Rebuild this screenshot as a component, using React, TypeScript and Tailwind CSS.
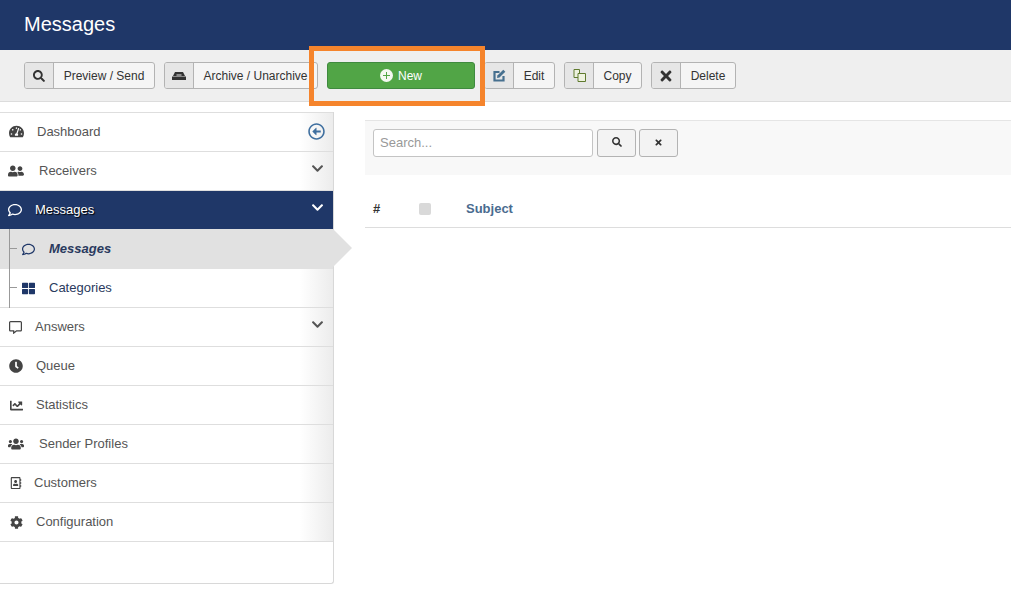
import type { ReactNode } from "react";
import {
  FaChartLine,
  FaChevronDown,
  FaCog,
  FaRegAddressBook,
  FaRegArrowAltCircleLeft,
  FaRegComment,
  FaRegCommentAlt,
  FaClock,
  FaSearch,
  FaTachometerAlt,
  FaThLarge,
  FaTimes,
  FaUserFriends,
  FaUsers,
} from "react-icons/fa";

function ToolButton({ icon, label, className }: { icon: ReactNode; label: string; className: string }) {
  return (
    <div className={`flex h-[27px] shrink-0 overflow-hidden rounded-[3px] border border-[#b3b3b3] bg-[#f5f5f5] text-xs text-[#333] ${className}`}>
      <span className="flex w-[29px] shrink-0 items-center justify-center border-r border-[#b3b3b3] bg-[#e6e6e6]">{icon}</span>
      <span className="flex flex-1 items-center justify-center whitespace-nowrap">{label}</span>
    </div>
  );
}

function NavRow({
  icon,
  label,
  textClass,
  chevron,
}: {
  icon: ReactNode;
  label: string;
  textClass: string;
  chevron?: boolean;
}) {
  return (
    <div className="relative flex h-[39px] items-center border-b border-[#dedede] bg-gradient-to-r from-white from-[90%] to-[#ececec] pl-[8px] text-[13px] text-[#555]">
      <span className="flex w-[16px] shrink-0 items-center justify-center text-[#444]">{icon}</span>
      <span className={textClass}>{label}</span>
      {chevron ? <FaChevronDown className="absolute right-[9px] top-[10px] text-[13px] text-[#555]" /> : null}
    </div>
  );
}

export default function App() {
  return (
    <div className="relative h-[595px] w-[1011px] overflow-hidden bg-white font-['Liberation_Sans',Arial,sans-serif]">
      <header className="flex h-[50px] items-center bg-[#1f3768] pb-[2px] pl-6 text-xl text-white">Messages</header>

      <div className="flex h-[52px] items-center gap-[9px] border-b border-[#dcdcdc] bg-[#efefef] pl-6">
        <ToolButton className="w-[131px]" icon={<FaSearch className="text-[12px] text-[#333]" />} label="Preview / Send" />
        <ToolButton
          className="w-[154px]"
          icon={
            <svg width="14" height="8" viewBox="0 0 14 8" fill="#333">
              <path d="M3 0h8l2 4H1z" />
              <path d="M0 4.6h14V8H0z" />
              <path d="M4.5 2.6h5v1h-5z" fill="#e6e6e6" />
            </svg>
          }
          label="Archive / Unarchive"
        />
        <div className="flex h-[27px] w-[148px] shrink-0 items-center justify-center gap-[5px] rounded-[3px] border border-[#3f8a3f] bg-[#51a546] text-xs font-medium text-white">
          <svg width="13" height="13" viewBox="0 0 13 13">
            <circle cx="6.5" cy="6.5" r="6.5" fill="#f4f8f2" />
            <path d="M6.5 3v7M3 6.5h7" stroke="#51a546" strokeWidth="1" />
          </svg>
          New
        </div>
        <ToolButton
          className="w-[71px]"
          icon={
            <svg width="13" height="13" viewBox="0 0 13 13" fill="none">
              <path d="M10.5 7v4.5H1.5V3H6.5" stroke="#47708f" strokeWidth="2.2" />
              <path d="M4.4 6.4 10.3.7l2 2-5.8 5.9-2.4.4z" fill="#47708f" />
            </svg>
          }
          label="Edit"
        />
        <ToolButton
          className="w-[78px]"
          icon={
            <svg width="13" height="13" viewBox="0 0 13 13" fill="#eef2df" stroke="#5f7a2e" strokeWidth="1">
              <path d="M1 .5h5.5v8H1z" />
              <path d="M5 4.5h7.5v8H5z" />
            </svg>
          }
          label="Copy"
        />
        <ToolButton className="w-[85px]" icon={<FaTimes className="text-[16px] text-[#333]" />} label="Delete" />
      </div>

      <div className="flex">
        <aside className="mt-[10px] h-[472px] w-[334px] shrink-0 rounded-br-[3px] border-r border-b border-[#d8d8d8]">
          <div className="relative flex h-[40px] items-center border-y border-[#dedede] bg-gradient-to-r from-white from-[90%] to-[#ececec] pb-[1px] pl-[9px] text-[13px] text-[#555]">
            <FaTachometerAlt className="text-[15px] text-[#444]" />
            <span className="ml-[13px]">Dashboard</span>
            <FaRegArrowAltCircleLeft className="absolute right-[8px] top-[10px] text-[17px] text-[#3f6f9f]" />
          </div>
          <NavRow icon={<FaUserFriends className="text-[16px]" />} label="Receivers" textClass="ml-[15px]" chevron />
          <div className="relative flex h-[38px] items-center bg-[#1f3768] pl-[8px] text-[13px] font-medium text-white [text-shadow:1px_1px_1px_#000]">
            <FaRegComment className="text-[14px]" />
            <span className="ml-[13px]">Messages</span>
            <FaChevronDown className="absolute right-[9px] top-[10px] text-[13px]" />
          </div>
          <div className="relative">
            <div className="relative flex h-[40px] items-center bg-[#e1e1e1] pl-[22px] text-[13px]">
              <span className="absolute left-[10px] top-[19px] h-px w-[7px] bg-[#999]" />
              <FaRegComment className="text-[13px] text-[#1f3768]" />
              <span className="ml-[14px] font-bold italic text-[#2a3a5e]">Messages</span>
              <span className="absolute left-full top-0 h-0 w-0 border-y-[19.5px] border-l-[19px] border-y-transparent border-l-[#e1e1e1]" />
            </div>
            <div className="relative flex h-[39px] items-center border-b border-[#dedede] bg-gradient-to-r from-white from-[90%] to-[#ececec] pl-[22px] text-[13px] text-[#2a3a5e]">
              <span className="absolute left-[10px] top-[18px] h-px w-[7px] bg-[#999]" />
              <FaThLarge className="text-[13px] text-[#1f3768]" />
              <span className="ml-[14px]">Categories</span>
            </div>
            <div className="absolute bottom-0 left-[9px] top-0 w-px bg-[#999]" />
          </div>
          <NavRow icon={<FaRegCommentAlt className="-ml-[1px] text-[13px]" />} label="Answers" textClass="ml-[11px]" chevron />
          <NavRow icon={<FaClock className="text-[14px]" />} label="Queue" textClass="ml-[12px]" />
          <NavRow icon={<FaChartLine className="text-[13px]" />} label="Statistics" textClass="ml-[12px]" />
          <NavRow icon={<FaUsers className="text-[16px]" />} label="Sender Profiles" textClass="ml-[15px]" />
          <NavRow icon={<FaRegAddressBook className="text-[12px]" />} label="Customers" textClass="ml-[10px]" />
          <NavRow icon={<FaCog className="text-[13px]" />} label="Configuration" textClass="ml-[12px]" />
        </aside>

        <main className="ml-[31px] flex-1 pt-[18px]">
          <div className="flex h-[55px] items-start gap-[4px] border-t border-[#e5e5e5] bg-[#f8f8f8] pl-2 pt-2">
            <div className="flex h-[28px] w-[220px] items-center rounded-[3px] border border-[#c4c4c4] bg-white pl-[6px] text-[13px] text-[#999]">
              Search...
            </div>
            <div className="flex h-[28px] w-[39px] items-center justify-center rounded-[3px] border border-[#b3b3b3] bg-[#f3f3f3] text-[#333]">
              <FaSearch className="-mt-[2px] text-[10px]" />
            </div>
            <div className="-ml-[1px] flex h-[28px] w-[39px] items-center justify-center rounded-[3px] border border-[#b3b3b3] bg-[#f3f3f3] text-[#333]">
              <FaTimes className="-mt-[2px] text-[9px]" />
            </div>
          </div>
          <div className="relative mt-[15px] flex h-[38px] items-center border-b border-[#ddd] pl-2 pt-[1px] text-[13px] font-bold">
            <span className="w-[46px] text-[#333]">#</span>
            <span className="h-[12px] w-[12px] rounded-[2px] bg-[#d9d9d9]" />
            <span className="ml-[35px] font-bold text-[#4a6b8f]">Subject</span>
          </div>
        </main>
      </div>

      <div className="absolute left-[309px] top-[46px] h-[60px] w-[176px] border-[5px] border-[#f5842c]" />
    </div>
  );
}
